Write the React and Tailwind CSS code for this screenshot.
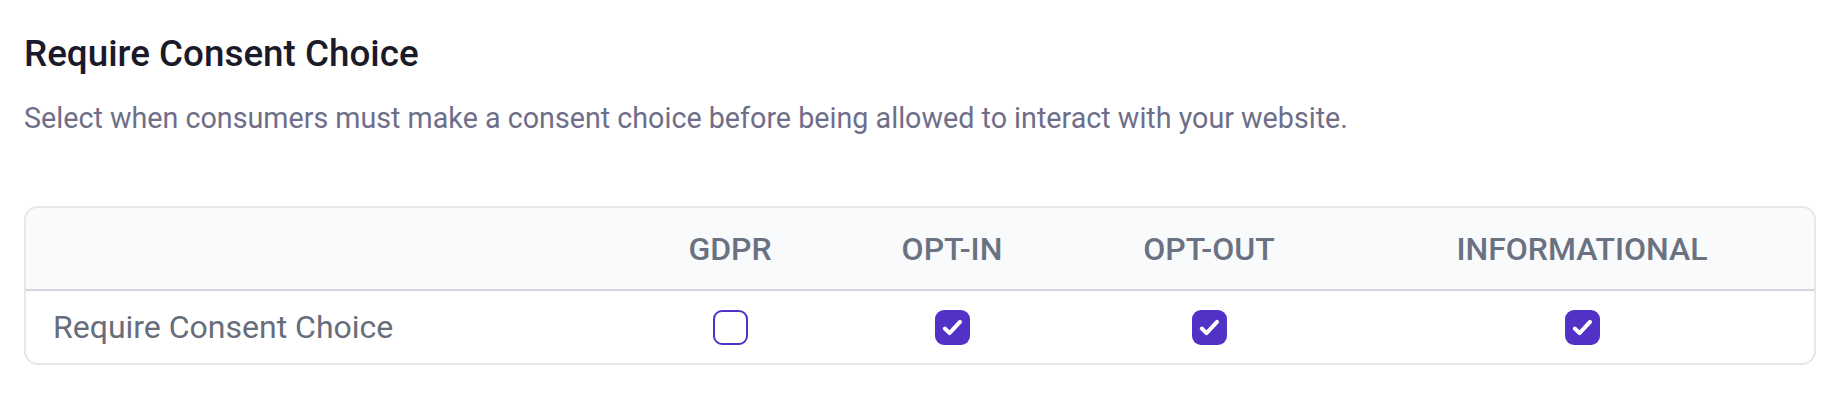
const columns = [
  { key: 'gdpr', label: 'GDPR', checked: false },
  { key: 'optin', label: 'OPT-IN', checked: true },
  { key: 'optout', label: 'OPT-OUT', checked: true },
  { key: 'info', label: 'INFORMATIONAL', checked: true },
];

const Checkbox = ({ checked }) => {
  if (!checked) {
    return (
      <div className="w-[35px] h-[35px] rounded-[9px] border-2 border-[#5131c6] bg-white" />
    );
  }
  return (
    <div className="w-[35px] h-[35px] rounded-[9px] bg-[#5131c6] flex items-center justify-center">
      <svg className="w-[35px] h-[35px]" viewBox="0 0 20 20" fill="none">
        <path
          d="M5.6 10.6l2.7 2.6 6-6.4"
          stroke="white"
          strokeWidth={2.3}
          strokeLinecap="round"
          strokeLinejoin="round"
        />
      </svg>
    </div>
  );
};

const App = () => {
  return (
    <div className="w-[1840px] h-[408px] bg-white px-6 pt-6 font-['Roboto',sans-serif]">
      <h2 className="text-[36.8px] leading-[60px] font-medium text-[#1b1a2a]">
        Require Consent Choice
      </h2>
      <p className="mt-[14px] text-[28.7px] leading-[40px] text-[#6f6e89]">
        Select when consumers must make a consent choice before being allowed to interact with your website.
      </p>

      <div className="mt-[68px] border-2 border-gray-200 rounded-[14px] overflow-hidden">
        <div className="grid grid-cols-[1fr_212px_232px_282px_464px] h-[83px] bg-gray-50 border-b-2 border-gray-300 items-center">
          <div />
          {columns.map((c) => (
            <div key={c.key} className="text-center text-[32px] font-medium text-gray-500">
              {c.label}
            </div>
          ))}
        </div>
        <div className="grid grid-cols-[1fr_212px_232px_282px_464px] h-[72px] items-center">
          <div className="pl-[27px] text-[32px] text-[#676d7b]">Require Consent Choice</div>
          {columns.map((c) => (
            <div key={c.key} className="flex justify-center">
              <Checkbox checked={c.checked} />
            </div>
          ))}
        </div>
      </div>
    </div>
  );
};

export default App;
